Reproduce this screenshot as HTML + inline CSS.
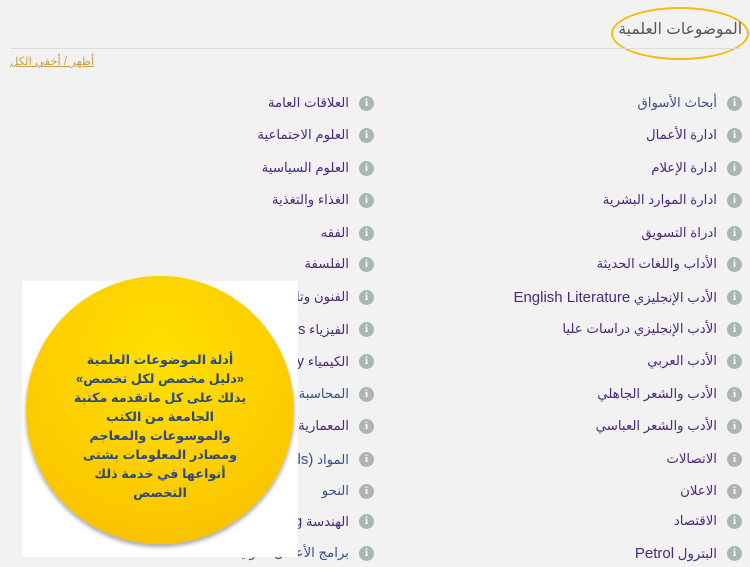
<!DOCTYPE html>
<html><head><meta charset="utf-8"><style>
body{margin:0;width:750px;height:567px;background:#f2f2f2;overflow:hidden;position:relative;font-family:"Liberation Sans","DejaVu Sans",sans-serif}
.t{position:absolute;right:8px;top:20px;font-size:15.5px;color:#555;direction:rtl;white-space:nowrap}
.ell{position:absolute;left:611px;top:7px;width:134px;height:49px;border:2px solid #f5bd0c;border-radius:50%}
.hr{position:absolute;left:10px;right:10px;top:48px;border-top:1px solid #ddd}
.tog{position:absolute;left:10px;top:54px;font-size:11.5px;color:#c9a04a;text-decoration:underline;direction:rtl}
.r{position:absolute;height:20px;display:flex;flex-direction:row-reverse;align-items:center;white-space:nowrap;font-size:13.3px;color:#4a2a7a}
.r span{direction:rtl}
.r b{font-weight:normal;font-size:15px}
.r i{display:inline-block;width:15px;height:15px;border-radius:50%;background:#abb5b5;color:#fff;font:bold 11px/15px "Liberation Serif",serif;text-align:center;margin-left:10px;font-style:normal;flex:none}
.r.b{color:#3e5088}
.box{position:absolute;left:22px;top:281px;width:276px;height:276px;background:#fff}
.circ{position:absolute;left:26px;top:276px;width:268px;height:268px;border-radius:50%;background:radial-gradient(circle at 50% 30%,#ffe000,#fcc800 70%,#f3b800);box-shadow:0 3px 4px rgba(0,0,0,.35)}
.ct{position:absolute;left:52px;top:350px;width:216px;text-align:center;direction:rtl;font-weight:bold;font-size:12.8px;line-height:19px;color:#2d4a7a}
</style></head><body>
<div class="ell"></div>
<div class="t">الموضوعات العلمية</div>
<div class="hr"></div>
<div class="tog">أظهر / أخفي الكل</div>

<div class="r b" style="right:8px;top:93px"><i>i</i><span>أبحاث الأسواق</span></div>
<div class="r" style="right:8px;top:125px"><i>i</i><span>ادارة الأعمال</span></div>
<div class="r" style="right:8px;top:158px"><i>i</i><span>ادارة الإعلام</span></div>
<div class="r" style="right:8px;top:190px"><i>i</i><span>ادارة الموارد البشرية</span></div>
<div class="r" style="right:8px;top:223px"><i>i</i><span>ادراة التسويق</span></div>
<div class="r" style="right:8px;top:254px"><i>i</i><span>الأداب واللغات الحديثة</span></div>
<div class="r" style="right:8px;top:287px"><i>i</i><span>الأدب الإنجليزي <b>English Literature</b></span></div>
<div class="r" style="right:8px;top:319px"><i>i</i><span>الأدب الإنجليزي دراسات عليا</span></div>
<div class="r" style="right:8px;top:351px"><i>i</i><span>الأدب العربي</span></div>
<div class="r" style="right:8px;top:384px"><i>i</i><span>الأدب والشعر الجاهلي</span></div>
<div class="r" style="right:8px;top:416px"><i>i</i><span>الأدب والشعر العباسي</span></div>
<div class="r" style="right:8px;top:449px"><i>i</i><span>الاتصالات</span></div>
<div class="r" style="right:8px;top:481px"><i>i</i><span>الاعلان</span></div>
<div class="r" style="right:8px;top:511px"><i>i</i><span>الاقتصاد</span></div>
<div class="r" style="right:8px;top:543px"><i>i</i><span>البترول <b>Petrol</b></span></div>

<div class="r" style="right:376px;top:93px"><i>i</i><span>العلاقات العامة</span></div>
<div class="r" style="right:376px;top:125px"><i>i</i><span>العلوم الاجتماعية</span></div>
<div class="r" style="right:376px;top:158px"><i>i</i><span>العلوم السياسية</span></div>
<div class="r" style="right:376px;top:190px"><i>i</i><span>الغذاء والتغذية</span></div>
<div class="r" style="right:376px;top:223px"><i>i</i><span>الفقه</span></div>
<div class="r" style="right:376px;top:254px"><i>i</i><span>الفلسفة</span></div>
<div class="r" style="right:376px;top:287px"><i>i</i><span>الفنون وتاريخ الفن</span></div>
<div class="r" style="right:376px;top:319px"><i>i</i><span>الفيزياء <b>Physics</b></span></div>
<div class="r" style="right:376px;top:351px"><i>i</i><span>الكيمياء <b>Chemistry</b></span></div>
<div class="r b" style="right:376px;top:384px"><i>i</i><span>المحاسبة</span></div>
<div class="r" style="right:376px;top:416px"><i>i</i><span>المعمارية الهندسة</span></div>
<div class="r b" style="right:376px;top:449px"><i>i</i><span>المواد <b>(Materials)</b></span></div>
<div class="r b" style="right:376px;top:481px"><i>i</i><span>النحو</span></div>
<div class="r" style="right:376px;top:511px"><i>i</i><span>الهندسة <b>Engineering</b></span></div>
<div class="r b" style="right:376px;top:543px"><i>i</i><span>برامج الأعمال الدولية</span></div>

<div class="box"></div>
<div class="circ"></div>
<div class="ct">أدلة الموضوعات العلمية<br>«دليل مخصص لكل تخصص»<br>يدلك على كل ماتقدمه مكتبة<br>الجامعة من الكتب<br>والموسوعات والمعاجم<br>ومصادر المعلومات بشتى<br>أنواعها في خدمة ذلك<br>التخصص</div>
</body></html>
